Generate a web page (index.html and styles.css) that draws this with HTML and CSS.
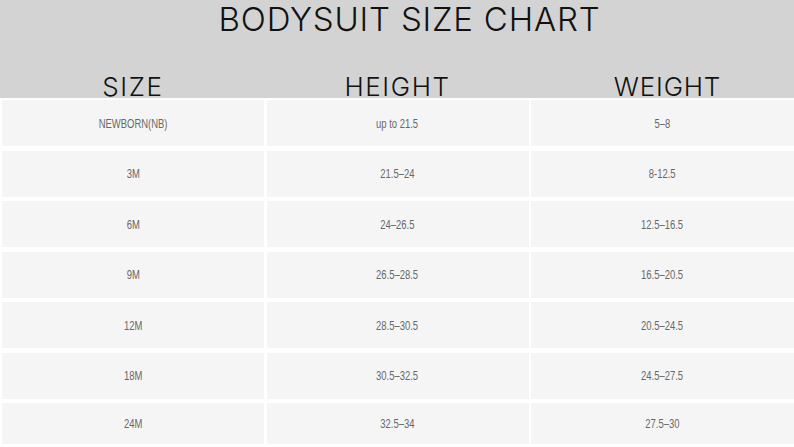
FILE: index.html
```html
<!DOCTYPE html>
<html lang="en">
<head>
<meta charset="utf-8">
<title>Bodysuit Size Chart</title>
<link rel="stylesheet" href="styles.css">
</head>
<body>
<div class="chart">
  <header class="chart-head">
    <h1 class="chart-title">BODYSUIT SIZE CHART</h1>
    <div class="cols head-cols">
      <div class="col-title">SIZE</div>
      <div class="col-title">HEIGHT</div>
      <div class="col-title col-title-w">WEIGHT</div>
    </div>
  </header>
  <div class="cols body-cols">
    <div class="cell"><span>NEWBORN(NB)</span></div><div class="cell"><span>up to 21.5</span></div><div class="cell"><span>5–8</span></div>
    <div class="cell"><span>3M</span></div><div class="cell"><span>21.5–24</span></div><div class="cell"><span>8-12.5</span></div>
    <div class="cell"><span>6M</span></div><div class="cell"><span>24–26.5</span></div><div class="cell"><span>12.5–16.5</span></div>
    <div class="cell"><span>9M</span></div><div class="cell"><span>26.5–28.5</span></div><div class="cell"><span>16.5–20.5</span></div>
    <div class="cell"><span>12M</span></div><div class="cell"><span>28.5–30.5</span></div><div class="cell"><span>20.5–24.5</span></div>
    <div class="cell"><span>18M</span></div><div class="cell"><span>30.5–32.5</span></div><div class="cell"><span>24.5–27.5</span></div>
    <div class="cell"><span>24M</span></div><div class="cell"><span>32.5–34</span></div><div class="cell"><span>27.5–30</span></div>
  </div>
</div>
</body>
</html>
```
FILE: styles.css
```css
html, body {
  margin: 0;
  padding: 0;
  background: #ffffff;
}
body {
  width: 794px;
  height: 447px;
  overflow: hidden;
}
.chart {
  display: flex;
  flex-direction: column;
}
.chart-head {
  height: 98px;
  background: #d3d3d3;
  display: flex;
  flex-direction: column;
}
.chart-title {
  margin: 0;
  font-family: Inter, "Noto Sans", sans-serif;
  font-weight: 300;
  font-size: 33px;
  line-height: 38px;
  letter-spacing: 0.8px;
  color: #111;
  text-align: center;
  padding-left: 25px;
}
.cols {
  display: grid;
  grid-template-columns: 262px 262px 1fr;
  column-gap: 2.5px;
  padding-left: 2px;
}
.head-cols {
  margin-top: auto;
}
.col-title {
  font-family: Inter, "Noto Sans", sans-serif;
  font-weight: 300;
  font-size: 26px;
  line-height: 22px;
  letter-spacing: 1.6px;
  color: #111;
  text-align: center;
}
.col-title-w {
  padding-left: 10px;
  letter-spacing: 0.8px;
}
.body-cols {
  margin-top: 2px;
  grid-template-rows: repeat(6, 46px) 41px;
  row-gap: 4.5px;
}
.cell {
  background: #f5f5f5;
  display: flex;
  align-items: center;
  justify-content: center;
  font-family: "Liberation Sans", Arial, sans-serif;
  font-size: 13.5px;
  color: #686868;
}
.cell span {
  display: inline-block;
  transform: scaleX(0.7);
}
```
